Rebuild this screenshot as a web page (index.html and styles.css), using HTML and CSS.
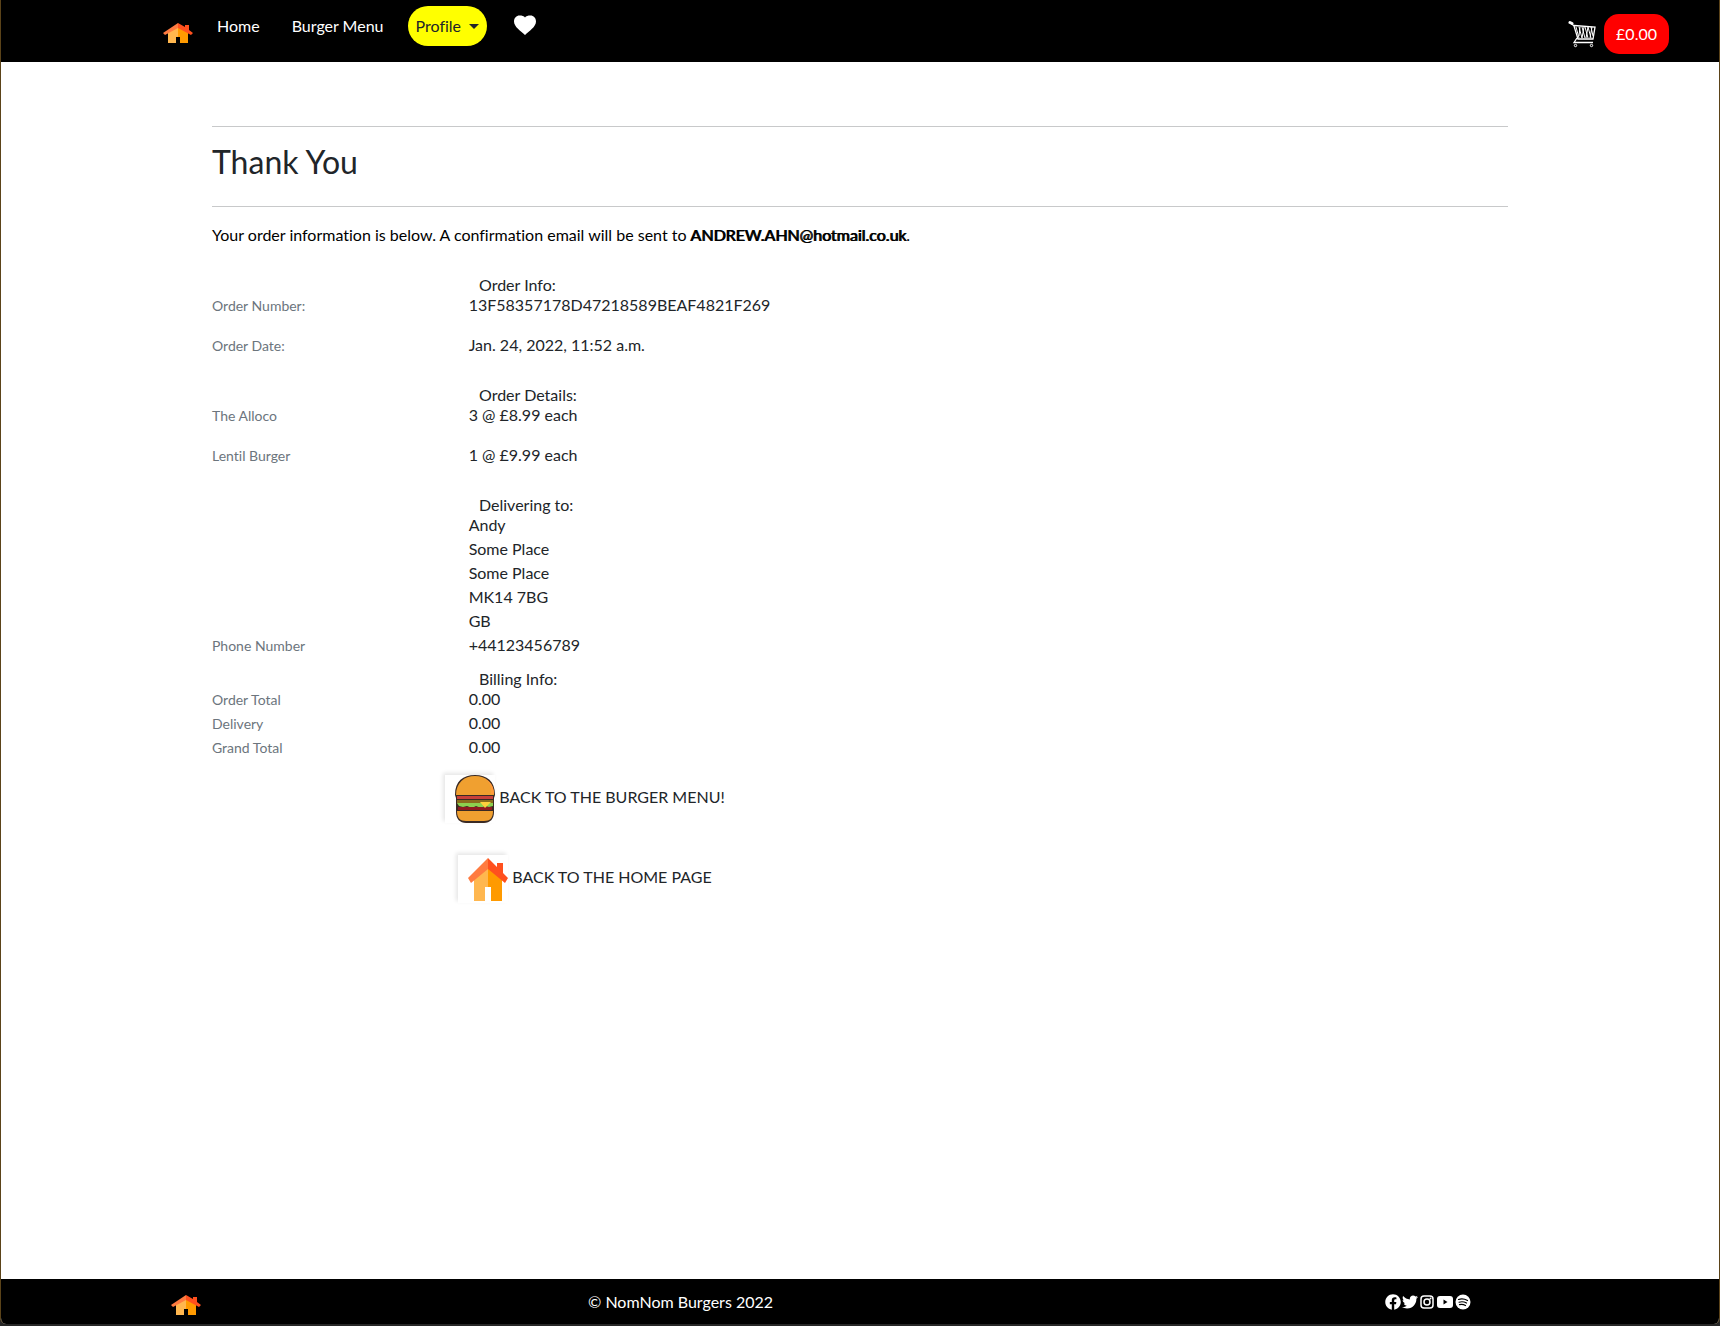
FILE: index.html
```html
<!DOCTYPE html>
<html lang="en">
<head>
  <meta charset="utf-8">
  <meta name="viewport" content="width=device-width, initial-scale=1">
  <title>NomNom Burgers - Thank You</title>
  <link rel="stylesheet" href="styles.css">
</head>
<body>
  <header class="topbar">
    <nav class="nav" aria-label="Main">
      <a class="brand" href="#" aria-label="NomNom Burgers home">
        <svg class="house-small" aria-hidden="true" viewBox="0 0 30 21">
          <path fill="#ffb74f" d="M5 9l10-6v11h-2v6H5z"/>
          <path fill="#ff9a00" d="M15 3l10 6v11h-8v-6h-2z"/>
          <path fill="#ff7b40" d="M15 0v5L2 12 0 10z"/>
          <path fill="#ff501e" d="M15 0v5l13 7 2-2-4-3V2h-4v2z"/>
        </svg>
      </a>
      <a class="nav-link" href="#">Home</a>
      <a class="nav-link" href="#">Burger Menu</a>
      <button class="profile" type="button" aria-haspopup="true">Profile<span class="caret"></span></button>
      <a class="heart" href="#" aria-label="Favourites">
        <svg aria-hidden="true" width="24" height="20" viewBox="0 0 24 20"><path fill="#fff" d="M12 20C8 16 1 12 1 6.500C1 3 3.500 .5 6.500 .5C9 .5 11 1 12 2.500C13 1 15 .5 17.500 .5C20.500 .5 23 3 23 6.500C23 12 16 16 12 20z"/></svg>
      </a>
    </nav>
    <a class="cart" href="#">
      <svg aria-hidden="true" width="28" height="28" viewBox="0 0 28 28" fill="none" stroke="#fff">
        <path stroke-width="3" stroke-linecap="round" d="M2 2.500l2 1"/>
        <path stroke-width="1.300" d="M3 3l3 3 4 13h15l2-12L6 5.500M9 18l-3 4.500h19"/>
        <path stroke-width="1" d="M8 7l3 11M11 7l3 11M14 7l3 11M17 7l3 11M20 7l3 11M23 7l2 9M11 16l1-9M14 18l2-11M18 18l2-11M22 18l2-11"/>
        <circle cx="7.500" cy="25.500" r="1.200"/><circle cx="23.500" cy="25.500" r="1.200"/>
      </svg>
      <span class="total">£0.00</span>
    </a>
  </header>

  <main class="container">
    <hr>
    <h1>Thank You</h1>
    <hr>
    <p class="intro">Your order information is below. A confirmation email will be sent to <strong>ANDREW.AHN@hotmail.co.uk</strong>.</p>

    <div class="order">
      <section class="group spaced">
        <h2>Order Info:</h2>
        <dl>
          <dt>Order Number:</dt><dd>13F58357178D47218589BEAF4821F269</dd>
          <dt>Order Date:</dt><dd>Jan. 24, 2022, 11:52 a.m.</dd>
        </dl>
      </section>
      <section class="group spaced">
        <h2>Order Details:</h2>
        <dl>
          <dt>The Alloco</dt><dd>3 @ £8.99 each</dd>
          <dt>Lentil Burger</dt><dd>1 @ £9.99 each</dd>
        </dl>
      </section>
      <section class="group">
        <h2>Delivering to:</h2>
        <dl>
          <dd>Andy</dd>
          <dd>Some Place</dd>
          <dd>Some Place</dd>
          <dd>MK14 7BG</dd>
          <dd>GB</dd>
          <dt>Phone Number</dt><dd>+44123456789</dd>
        </dl>
      </section>
      <section class="group">
        <h2>Billing Info:</h2>
        <dl>
          <dt>Order Total</dt><dd>0.00</dd>
          <dt>Delivery</dt><dd>0.00</dd>
          <dt>Grand Total</dt><dd>0.00</dd>
        </dl>
      </section>

      <div class="actions">
        <a class="back" href="#">
          <span class="tile">
            <svg aria-hidden="true" width="40" height="48" viewBox="0 0 40 48">
              <path fill="#3a2a24" d="M0 20C0 6 8 0 20 0s20 6 20 20l-1 3v14c0 7-4 11-10 11H11C5 48 1 44 1 37V23z"/>
              <path fill="#f0a030" d="M1 20C1 8 9 1 20 1s19 7 19 19z"/>
              <path fill="#ff9a3c" d="M27 3c7 2 10 8 9 16h3C39 11 35 5 27 3z"/>
              <path fill="#c8403a" d="M2 21h36v3H2z"/>
              <path fill="#8a6d1c" d="M2 25h36v3H2z"/>
              <path fill="#8cd04f" d="M2 28h36v3l-4 1-4-1-4 2-5-2-4 2-5-2-4 1-4-1z"/>
              <path fill="#8e1b20" d="M3 32h34v3H3z"/>
              <path fill="#ffd03c" d="M25 27h11l-6 6z"/>
              <path fill="#f0a030" d="M2 36h36c0 7-3 10-9 10H11c-6 0-9-3-9-10z"/>
            </svg>
          </span>
          BACK TO THE BURGER MENU!
        </a>
        <a class="back" href="#">
          <span class="tile">
            <svg aria-hidden="true" width="40" height="43" viewBox="0 0 40 43">
              <path fill="#ffb74f" d="M6 18L20 7v22h-3v14H6z"/>
              <path fill="#ff9a00" d="M20 7l14 11v25H23V29h-3z"/>
              <path fill="#ff7b40" d="M20 0v11L3 25l-3-5z"/>
              <path fill="#ff501e" d="M20 0v11l17 14 3-5-5-5V5h-6v4z"/>
            </svg>
          </span>
          BACK TO THE HOME PAGE
        </a>
      </div>
    </div>
  </main>

  <footer class="footer">
    <a class="brand" href="#" aria-label="Home">
      <svg class="house-small" aria-hidden="true" viewBox="0 0 30 21">
        <path fill="#ffb74f" d="M5 9l10-6v11h-2v6H5z"/>
        <path fill="#ff9a00" d="M15 3l10 6v11h-8v-6h-2z"/>
        <path fill="#ff7b40" d="M15 0v5L2 12 0 10z"/>
        <path fill="#ff501e" d="M15 0v5l13 7 2-2-4-3V2h-4v2z"/>
      </svg>
    </a>
    <p class="copyright">© NomNom Burgers 2022</p>
    <div class="social">
      <a href="#" aria-label="Facebook"><svg width="16" height="16" viewBox="0 0 512 512"><path fill="#fff" d="M504 256C504 119 393 8 256 8S8 119 8 256c0 123.780 90.690 226.380 209.250 245V327.690h-63V256h63v-54.640c0-62.150 37-96.480 93.670-96.480 27.140 0 55.520 4.840 55.520 4.840v61h-31.280c-30.800 0-40.410 19.120-40.410 38.730V256h68.780l-11 71.690h-57.780V501C413.310 482.380 504 379.780 504 256z"/></svg></a>
      <a href="#" aria-label="Twitter"><svg width="16" height="16" viewBox="0 0 512 512"><path fill="#fff" d="M459.370 151.716c.325 4.548.325 9.097.325 13.645 0 138.720-105.583 298.558-298.558 298.558-59.452 0-114.680-17.219-161.137-47.106 8.447.974 16.568 1.299 25.340 1.299 49.055 0 94.213-16.568 130.274-44.832-46.132-.975-84.792-31.188-98.112-72.772 6.498.974 12.995 1.624 19.818 1.624 9.421 0 18.843-1.300 27.614-3.573-48.081-9.747-84.143-51.980-84.143-102.985v-1.299c13.969 7.797 30.214 12.670 47.431 13.319-28.264-18.843-46.781-51.005-46.781-87.391 0-19.492 5.197-37.360 14.294-52.954 51.655 63.675 129.300 105.258 216.365 109.807-1.624-7.797-2.599-15.918-2.599-24.040 0-57.828 46.782-104.934 104.934-104.934 30.213 0 57.502 12.670 76.670 33.137 23.715-4.548 46.456-13.320 66.599-25.340-7.798 24.366-24.366 44.833-46.132 57.827 21.117-2.273 41.584-8.122 60.426-16.243-14.292 20.791-32.161 39.308-52.628 54.253z"/></svg></a>
      <a href="#" aria-label="Instagram"><svg width="16" height="16" viewBox="0 0 16 16"><rect x="2" y="2" width="12" height="12" rx="3" fill="none" stroke="#fff" stroke-width="1.500"/><circle cx="8" cy="8" r="3" fill="none" stroke="#fff" stroke-width="1.500"/><circle cx="11.500" cy="4.500" r="1" fill="#fff"/></svg></a>
      <a href="#" aria-label="YouTube"><svg width="18" height="16" viewBox="0 0 18 16"><rect x="1" y="2" width="16" height="12" rx="3" fill="#fff"/><path d="M7.500 5.500v5l4-2.500z"/></svg></a>
      <a href="#" aria-label="Spotify"><svg width="16" height="16" viewBox="0 0 16 16"><circle cx="8" cy="8" r="7.500" fill="#fff"/><path fill="none" stroke="#000" stroke-width="1.200" stroke-linecap="round" d="M3.500 5.500q4.500-1.500 9 1M4 8.200q4-1.200 7.500.8M4.500 10.700q3-.8 6 .8"/></svg></a>
    </div>
  </footer>
</body>
</html>
```
FILE: styles.css
```css
* {
  box-sizing: border-box;
}

html {
  background: #262626;
}

body {
  display: flex;
  flex-direction: column;
  min-height: calc(100vh - 2px);
  margin: 0 0 2px;
  border: 1px solid #5b4319;
  border-width: 0 1px;
  border-radius: 0 0 6px 6px;
  overflow: hidden;
  background: #fff;
  color: #212529;
  font: 16px/24px Lato, sans-serif;
  font-variant-ligatures: none;
}

a {
  color: inherit;
  text-decoration: none;
}

svg {
  display: block;
}

.topbar {
  display: flex;
  justify-content: space-between;
  align-items: center;
  height: 62px;
  padding: 0 50px 0 162px;
  background: #000;
  color: #fff;
}

.nav {
  display: flex;
  align-items: center;
  gap: 16px;
  height: 100%;
  padding-bottom: 10px;
}

.brand {
  padding-top: 14px;
}

.house-small {
  width: 30px;
  height: 21px;
}

.nav-link {
  padding: 8px;
}

.profile {
  display: flex;
  align-items: center;
  height: 40px;
  padding: 0 8px;
  border: 0;
  border-radius: 20px;
  background: #ff0;
  color: #212529;
  font: inherit;
}

.caret {
  margin-left: 8px;
  border: 5px solid transparent;
  border-top-color: #212529;
  border-bottom: 0;
}

.heart {
  padding: 0 10px 2px;
}

.cart {
  display: flex;
  align-items: center;
  gap: 8px;
  padding-top: 6px;
}

.total {
  padding: 8px 12px;
  border-radius: 15px;
  background: #f00;
}

.container {
  flex: 1;
  width: 100%;
  max-width: 1320px;
  margin: 0 auto;
  padding: 64px 12px 0;
}

hr {
  height: 1px;
  margin: 0;
  border: 0;
  background: #c8c9ca;
}

h1 {
  margin: 15px 0 25px;
  font-size: 32px;
  font-weight: 400;
  line-height: 39px;
}

.intro {
  margin: 16px 0;
  color: #000;
}

.intro strong {
  font-weight: 400;
  text-shadow: 1px 0 0 #000;
}

.order {
  max-width: 770px;
}

.group h2 {
  margin: 0;
  padding: 14px 0 0 267px;
  font-size: 16px;
  font-weight: 400;
  line-height: 16px;
}

.group dl {
  display: grid;
  grid-template-columns: 1fr 2fr;
  margin: 0;
}

.group.spaced dl {
  row-gap: 16px;
  padding-bottom: 16px;
}

.group dt {
  padding-top: 2px;
  color: #6c757d;
  font-size: 14px;
  line-height: 22px;
}

.group dd {
  grid-column: 2;
  margin: 0;
}

.actions {
  display: flex;
  flex-direction: column;
  align-items: center;
  gap: 32px;
  padding: 14px 24px 0 0;
}

.back {
  display: flex;
  align-items: center;
  gap: 4px;
  height: 48px;
}

.tile {
  display: flex;
  justify-content: flex-end;
  align-items: center;
  width: 50px;
  height: 48px;
  margin-top: 4px;
  box-shadow: -2px -2px 4px rgba(0, 0, 0, 0.1);
}

.footer {
  display: grid;
  grid-template-columns: 417px 1fr auto;
  align-items: center;
  height: 45px;
  padding: 0 248px 0 170px;
  background: #000;
  color: #fff;
}

.footer .brand {
  padding-top: 8px;
}

.copyright {
  margin: 0;
}

.social {
  display: flex;
  gap: 1px;
}
```
